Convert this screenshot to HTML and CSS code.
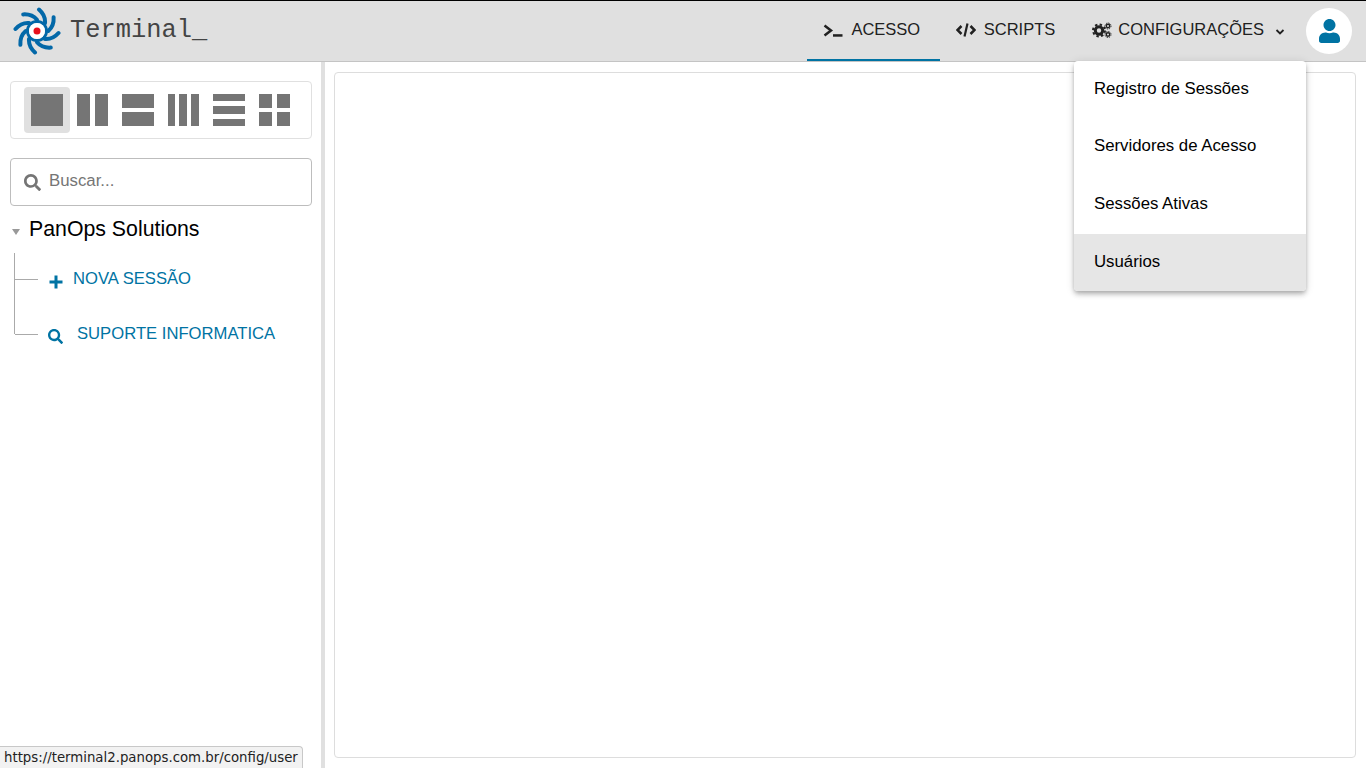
FILE: index.html
```html
<!DOCTYPE html>
<html lang="pt-BR">
<head>
    <meta charset="UTF-8">
    <title>Terminal</title>
    <link rel="stylesheet" href="styles.css">
</head>
<body>
    <!-- header -->
    <header class="topbar">
        <div class="brand">
            <svg class="logo" viewBox="0 0 48 48">
                <g fill="none" stroke="#0368a8" stroke-width="4" stroke-linecap="round">
                    <path d="M26 2.500C30 6 32.500 10 32 16"/>
                    <path d="M26 2.500C30 6 32.500 10 32 16" transform="rotate(45 24 24)"/>
                    <path d="M26 2.500C30 6 32.500 10 32 16" transform="rotate(90 24 24)"/>
                    <path d="M26 2.500C30 6 32.500 10 32 16" transform="rotate(135 24 24)"/>
                    <path d="M26 2.500C30 6 32.500 10 32 16" transform="rotate(180 24 24)"/>
                    <path d="M26 2.500C30 6 32.500 10 32 16" transform="rotate(225 24 24)"/>
                    <path d="M26 2.500C30 6 32.500 10 32 16" transform="rotate(270 24 24)"/>
                    <path d="M26 2.500C30 6 32.500 10 32 16" transform="rotate(315 24 24)"/>
                    <circle cx="24" cy="24" r="9.500" stroke-width="3"/>
                </g>
                <circle cx="24" cy="24" r="8" fill="#fff"/>
                <circle cx="24" cy="24" r="3.500" fill="#e8101c"/>
            </svg>
            <span class="brand-name">Terminal_</span>
        </div>

        <nav class="tabs">
            <a class="tab tab-active">
                <svg class="tab-icon" viewBox="0 0 20 16"><path d="M1.500 3.500 8 8.500l-6.500 5" fill="none" stroke="#212121" stroke-width="2.500"/><rect x="10" y="12.200" width="9.500" height="2.500" fill="#212121"/></svg>
                ACESSO
            </a>
            <a class="tab">
                <svg class="tab-icon" viewBox="0 0 20 16"><path d="M5.500 4 1.500 8l4 4M14.500 4l4 4-4 4" fill="none" stroke="#212121" stroke-width="2.500"/><path d="M11.500 1.500 8.500 14.500" fill="none" stroke="#212121" stroke-width="2.200"/></svg>
                SCRIPTS
            </a>
            <a class="tab tab-config">
                <svg class="tab-icon" viewBox="0 0 20 16">
                    <g fill="none" stroke="#212121">
                        <circle cx="7" cy="8.500" r="3.700" stroke-width="3"/>
                        <circle cx="7" cy="8.500" r="6" stroke-width="2" stroke-dasharray="2.400 2.300"/>
                        <circle cx="16" cy="4" r="1.700" stroke-width="1.400"/>
                        <circle cx="16" cy="4" r="3" stroke-width="1" stroke-dasharray="1.300 1.050"/>
                        <circle cx="16" cy="12.500" r="1.700" stroke-width="1.400"/>
                        <circle cx="16" cy="12.500" r="3" stroke-width="1" stroke-dasharray="1.300 1.050"/>
                    </g>
                </svg>
                CONFIGURAÇÕES
                <svg class="chevron" viewBox="0 0 10 6"><path d="M1.500 1 5 4.500 8.500 1" fill="none" stroke="#212121" stroke-width="1.800"/></svg>
            </a>
        </nav>

        <div class="avatar">
            <svg viewBox="0 0 448 512"><path fill="#0073a3" d="M224 256c70.700 0 128-57.300 128-128S294.700 0 224 0 96 57.300 96 128s57.300 128 128 128zm89.600 32h-16.700c-22.200 10.200-46.900 16-72.900 16s-50.600-5.800-72.900-16h-16.700C60.200 288 0 348.200 0 422.400V464c0 26.500 21.500 48 48 48h352c26.500 0 48-21.500 48-48v-41.600c0-74.200-60.200-134.400-134.400-134.400z"/></svg>
        </div>
    </header>

    <div class="content">
        <!-- sidebar -->
        <aside class="sidebar">
            <div class="layouts">
                <button class="layout layout-active"><span class="grid g-one"><i></i></span></button>
                <button class="layout"><span class="grid g-cols2"><i></i><i></i></span></button>
                <button class="layout"><span class="grid g-rows2"><i></i><i></i></span></button>
                <button class="layout"><span class="grid g-cols3"><i></i><i></i><i></i></span></button>
                <button class="layout"><span class="grid g-rows3"><i></i><i></i><i></i></span></button>
                <button class="layout"><span class="grid g-quad"><i></i><i></i><i></i><i></i></span></button>
            </div>

            <div class="search">
                <svg class="search-icon" viewBox="0 0 512 512"><path fill="#757575" d="M505 442.700L405.300 343c-4.500-4.500-10.600-7-17-7H372c27.600-35.300 44-79.700 44-128C416 93.100 322.900 0 208 0S0 93.100 0 208s93.100 208 208 208c48.300 0 92.700-16.400 128-44v16.300c0 6.400 2.500 12.500 7 17l99.700 99.700c9.400 9.400 24.600 9.400 33.900 0l28.300-28.300c9.400-9.400 9.400-24.600.1-34zM208 336c-70.700 0-128-57.200-128-128 0-70.700 57.200-128 128-128 70.700 0 128 57.200 128 128 0 70.700-57.200 128-128 128z"/></svg>
                <span>Buscar...</span>
            </div>

            <!-- tree -->
            <div class="tree-title">
                <span class="caret"></span>
                PanOps Solutions
            </div>
            <ul class="tree">
                <li class="tree-item">
                    <svg class="plus-icon" viewBox="0 0 14 14"><path d="M7 .5v13M.5 7h13" stroke="#0073a3" stroke-width="3"/></svg>
                    NOVA SESSÃO
                </li>
                <li class="tree-item item-search">
                    <svg class="item-icon" viewBox="0 0 512 512"><path fill="#0073a3" d="M505 442.700L405.300 343c-4.500-4.500-10.600-7-17-7H372c27.600-35.300 44-79.700 44-128C416 93.100 322.900 0 208 0S0 93.100 0 208s93.100 208 208 208c48.300 0 92.700-16.400 128-44v16.300c0 6.400 2.500 12.500 7 17l99.700 99.700c9.400 9.400 24.600 9.400 33.900 0l28.300-28.300c9.400-9.400 9.400-24.600.1-34zM208 336c-70.700 0-128-57.200-128-128 0-70.700 57.200-128 128-128 70.700 0 128 57.200 128 128 0 70.700-57.200 128-128 128z"/></svg>
                    SUPORTE INFORMATICA
                </li>
            </ul>
        </aside>

        <div class="splitter"></div>

        <!-- session area -->
        <main class="main">
            <div class="panel"></div>
        </main>
    </div>

    <!-- menu -->
    <ul class="menu">
        <li>Registro de Sessões</li>
        <li>Servidores de Acesso</li>
        <li>Sessões Ativas</li>
        <li class="menu-hover">Usuários</li>
    </ul>

    <div class="status">https://terminal2.panops.com.br/config/user</div>
</body>
</html>
```

FILE: styles.css
```css
* {
    box-sizing: border-box;
}

body {
    margin: 0;
    height: 768px;
    overflow: hidden;
    display: flex;
    flex-direction: column;
    background: #fff;
    font-family: "Liberation Sans", Arial, sans-serif;
    font-size: 16.800px;
    color: #000;
}

/* header */
.topbar {
    height: 62px;
    flex: none;
    display: flex;
    align-items: center;
    background: #e0e0e0;
    border-top: 1px solid #000;
    border-bottom: 1px solid #c4c4c4;
    padding-right: 14px;
}

.brand {
    display: flex;
    align-items: center;
    margin-right: auto;
    padding-left: 13px;
}

.logo {
    width: 48px;
    height: 48px;
}

.brand-name {
    margin: 0 0 2px 9px;
    font-family: "Liberation Mono", monospace;
    font-size: 25.400px;
    color: #444;
}

.tabs {
    display: flex;
    align-self: stretch;
}

.tab {
    display: flex;
    align-items: center;
    gap: 8px;
    padding: 0 16px 2px;
    color: #212121;
    font-size: 16.500px;
    border-bottom: 2px solid transparent;
}

.tab:first-child {
    padding: 0 19.500px 2px 16px;
}

.tab-config {
    padding-left: 21px;
    gap: 6px;
}

.tab-active {
    border-bottom-color: #0073a3;
}

.tab-icon {
    width: 20px;
    height: 16px;
    margin-top: 2px;
}

.chevron {
    width: 10px;
    height: 6px;
    margin: 6px 5px 0 5px;
}

.avatar {
    width: 46px;
    height: 46px;
    border-radius: 50%;
    background: #fff;
    display: flex;
    align-items: center;
    justify-content: center;
}

.avatar svg {
    width: 21px;
    height: 24px;
}

/* body */
.content {
    flex: 1;
    display: flex;
    min-height: 0;
}

.sidebar {
    width: 321px;
    flex: none;
    padding: 19px 9px 0 10px;
}

.splitter {
    width: 4px;
    flex: none;
    background: #e0e0e0;
}

.main {
    flex: 1;
    padding: 10px 10px 10px 9px;
}

.panel {
    height: 100%;
    border: 1px solid #ddd;
    border-radius: 4px;
}

/* layouts */
.layouts {
    height: 58px;
    display: flex;
    align-items: center;
    padding-left: 13px;
    border: 1px solid #e0e0e0;
    border-radius: 4px;
}

.layout {
    width: 45.500px;
    height: 46px;
    padding: 0;
    border: none;
    border-radius: 4px;
    background: none;
    display: flex;
    align-items: center;
    justify-content: center;
}

.layout-active {
    background: #e0e0e0;
}

.grid {
    width: 31.500px;
    height: 32px;
    display: grid;
}

.grid i {
    background: #757575;
}

.g-cols2 {
    grid-template-columns: 1fr 1fr;
    gap: 5px;
}

.g-rows2 {
    grid-template-rows: 1fr 1fr;
    gap: 4px;
}

.g-cols3 {
    grid-template-columns: 1fr 1fr 1fr;
    gap: 4px;
}

.g-rows3 {
    grid-template-rows: 1fr 1fr 1fr;
    gap: 5px;
}

.g-quad {
    grid-template: 1fr 1fr / 1fr 1fr;
    gap: 4px 5px;
}

/* search */
.search {
    height: 48px;
    margin-top: 19px;
    display: flex;
    align-items: center;
    gap: 8px;
    padding: 0 0 2px 13px;
    border: 1px solid #bdbdbd;
    border-radius: 4px;
    color: #757575;
}

.search-icon {
    width: 17px;
    height: 17px;
    margin-top: 2px;
}

/* tree */
.tree-title {
    display: flex;
    align-items: center;
    height: 23px;
    margin-top: 12px;
    font-size: 21.300px;
    padding-left: 2px;
    gap: 9px;
}

.caret {
    width: 0;
    height: 0;
    margin-top: 4px;
    border-left: 4px solid transparent;
    border-right: 4px solid transparent;
    border-top: 6px solid #999;
}

.tree {
    list-style: none;
    margin: 12px 0 0 4px;
    padding: 0;
    width: 290px;
    border-left: 1px solid #aaa;
    height: 81px;
    position: relative;
}

.tree-item {
    height: 55px;
    display: flex;
    align-items: center;
    color: #0073a3;
    font-size: 16.650px;
    position: relative;
    padding: 0 0 4px 34px;
    gap: 10px;
}

/* connector */
.tree-item::before {
    content: "";
    position: absolute;
    left: 0;
    top: 26px;
    width: 23px;
    border-top: 1px solid #aaa;
}

.item-search {
    padding-left: 33px;
    gap: 14px;
}

.plus-icon {
    width: 14px;
    height: 14px;
    margin-top: 6px;
}

.item-icon {
    width: 15px;
    height: 15px;
    margin-top: 5px;
}

/* menu */
.menu {
    position: absolute;
    left: 1074px;
    top: 61px;
    width: 232px;
    margin: 0;
    padding: 0;
    list-style: none;
    background: #fff;
    border-radius: 4px;
    overflow: hidden;
    box-shadow: 0 2px 4px -1px rgba(0, 0, 0, 0.2), 0 4px 5px 0 rgba(0, 0, 0, 0.14), 0 1px 10px 0 rgba(0, 0, 0, 0.12);
}

.menu li {
    height: 57.500px;
    display: flex;
    align-items: center;
    padding: 0 0 2px 20px;
}

.menu .menu-hover {
    background: #e6e6e6;
    padding-bottom: 0;
}

/* link preview */
.status {
    position: absolute;
    left: 0;
    bottom: 0;
    height: 22px;
    padding: 0 4px;
    display: flex;
    align-items: center;
    background: #f2f2f2;
    border: 1px solid #c8c8c8;
    border-left: none;
    border-bottom: none;
    border-top-right-radius: 4px;
    font-family: "DejaVu Sans", sans-serif;
    font-size: 13.300px;
    color: #222;
}
```
